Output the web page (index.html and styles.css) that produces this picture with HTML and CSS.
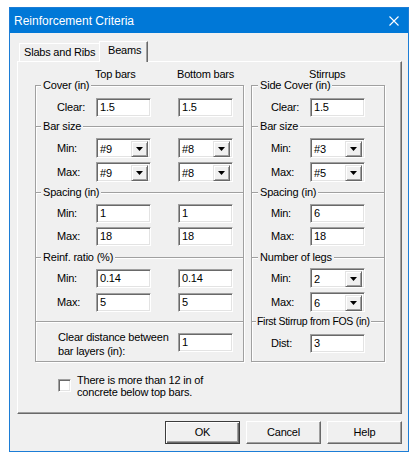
FILE: index.html
```html
<!DOCTYPE html>
<html>
<head>
    <meta charset="UTF-8">
    <title>Reinforcement Criteria</title>
    <link rel="stylesheet" href="styles.css">
</head>
<body>
    <div class="window">
        <div class="titlebar">
            <span class="title">Reinforcement Criteria</span>
            <svg class="close" width="10" height="10" viewBox="0 0 10 10">
                <path d="M0.5 0.5 L9.5 9.5 M9.5 0.5 L0.5 9.5" stroke="#fff" stroke-width="1.1" fill="none"/>
            </svg>
        </div>
        <div class="content">
            <div class="tabs">
                <div class="tab tab-slabs">Slabs and Ribs</div>
                <div class="tab tab-active">Beams</div>
            </div>
            <div class="panel">
                <div class="cols">
                    <!-- top / bottom bars -->
                    <div class="col col-left">
                        <div class="col-head grid3"><span></span><span>Top bars</span><span class="nowrap">Bottom bars</span></div>
                        <div class="box">
                            <div class="sec sec-cover">
                                <div class="legend">Cover (in)</div>
                                <div class="rows pad11">
                                    <div class="row grid3"><span>Clear:</span><div class="edit">1.5</div><div class="edit">1.5</div></div>
                                </div>
                            </div>
                            <div class="sec sec-bar">
                                <div class="legend">Bar size</div>
                                <div class="rows pad11">
                                    <div class="row grid3"><span>Min:</span>
                                        <div class="combo"><span>#9</span><div class="drop"><svg width="7" height="4" viewBox="0 0 7 4"><path d="M0 0 H7 L3.5 4 Z" fill="#000"/></svg></div></div>
                                        <div class="combo"><span>#8</span><div class="drop"><svg width="7" height="4" viewBox="0 0 7 4"><path d="M0 0 H7 L3.5 4 Z" fill="#000"/></svg></div></div>
                                    </div>
                                    <div class="row grid3"><span>Max:</span>
                                        <div class="combo"><span>#9</span><div class="drop"><svg width="7" height="4" viewBox="0 0 7 4"><path d="M0 0 H7 L3.5 4 Z" fill="#000"/></svg></div></div>
                                        <div class="combo"><span>#8</span><div class="drop"><svg width="7" height="4" viewBox="0 0 7 4"><path d="M0 0 H7 L3.5 4 Z" fill="#000"/></svg></div></div>
                                    </div>
                                </div>
                            </div>
                            <div class="sec sec-spacing">
                                <div class="legend">Spacing (in)</div>
                                <div class="rows pad10 tight">
                                    <div class="row grid3"><span>Min:</span><div class="edit">1</div><div class="edit">1</div></div>
                                    <div class="row grid3"><span>Max:</span><div class="edit">18</div><div class="edit">18</div></div>
                                </div>
                            </div>
                            <div class="sec sec-ratio">
                                <div class="legend">Reinf. ratio (%)</div>
                                <div class="rows pad10">
                                    <div class="row grid3"><span>Min:</span><div class="edit">0.14</div><div class="edit">0.14</div></div>
                                    <div class="row grid3"><span>Max:</span><div class="edit">5</div><div class="edit">5</div></div>
                                </div>
                            </div>
                            <div class="sec sec-last">
                                <div class="rows pad8">
                                    <div class="row grid3 row-layers">
                                        <span class="layers-label">Clear distance between<br>bar layers (in):</span>
                                        <div class="edit">1</div>
                                    </div>
                                </div>
                            </div>
                        </div>
                    </div>
                    <!-- stirrups -->
                    <div class="col col-right">
                        <div class="col-head grid2"><span></span><span>Stirrups</span></div>
                        <div class="box">
                            <div class="sec sec-cover">
                                <div class="legend">Side Cover (in)</div>
                                <div class="rows pad11">
                                    <div class="row grid2"><span>Clear:</span><div class="edit">1.5</div></div>
                                </div>
                            </div>
                            <div class="sec sec-bar">
                                <div class="legend">Bar size</div>
                                <div class="rows pad11">
                                    <div class="row grid2"><span>Min:</span>
                                        <div class="combo"><span>#3</span><div class="drop"><svg width="7" height="4" viewBox="0 0 7 4"><path d="M0 0 H7 L3.5 4 Z" fill="#000"/></svg></div></div>
                                    </div>
                                    <div class="row grid2"><span>Max:</span>
                                        <div class="combo"><span>#5</span><div class="drop"><svg width="7" height="4" viewBox="0 0 7 4"><path d="M0 0 H7 L3.5 4 Z" fill="#000"/></svg></div></div>
                                    </div>
                                </div>
                            </div>
                            <div class="sec sec-spacing">
                                <div class="legend">Spacing (in)</div>
                                <div class="rows pad10 tight">
                                    <div class="row grid2"><span>Min:</span><div class="edit">6</div></div>
                                    <div class="row grid2"><span>Max:</span><div class="edit">18</div></div>
                                </div>
                            </div>
                            <div class="sec sec-ratio">
                                <div class="legend">Number of legs</div>
                                <div class="rows pad10">
                                    <div class="row grid2"><span>Min:</span>
                                        <div class="combo"><span>2</span><div class="drop"><svg width="7" height="4" viewBox="0 0 7 4"><path d="M0 0 H7 L3.5 4 Z" fill="#000"/></svg></div></div>
                                    </div>
                                    <div class="row grid2"><span>Max:</span>
                                        <div class="combo"><span>6</span><div class="drop"><svg width="7" height="4" viewBox="0 0 7 4"><path d="M0 0 H7 L3.5 4 Z" fill="#000"/></svg></div></div>
                                    </div>
                                </div>
                            </div>
                            <div class="sec sec-last">
                                <div class="legend legend-wide">First Stirrup from FOS (in)</div>
                                <div class="rows pad11">
                                    <div class="row grid2"><span>Dist:</span><div class="edit">3</div></div>
                                </div>
                            </div>
                        </div>
                    </div>
                </div>
                <div class="check">
                    <div class="checkbox"></div>
                    <div class="check-text">There is more than 12 in of<br>concrete below top bars.</div>
                </div>
            </div>
            <div class="buttons">
                <div class="btn btn-default">OK</div>
                <div class="btn">Cancel</div>
                <div class="btn">Help</div>
            </div>
        </div>
    </div>
</body>
</html>
```

FILE: styles.css
```css
body {
    margin: 0;
    background: #fff;
    font-family: "Liberation Sans", Arial, sans-serif;
    font-size: 11px;
    letter-spacing: -0.2px;
    color: #000;
}
.window {
    box-sizing: border-box;
    width: 400px;
    height: 445px;
    margin: 7px 0 0 9px;
    border: 1px solid #1c7dd6;
    background: #f0f0f0;
}
.titlebar {
    height: 25px;
    background: #0078d7;
    color: #fff;
    display: flex;
    align-items: center;
    justify-content: space-between;
    padding: 0 9px 0 4px;
}
.title {
    font-size: 12px;
    letter-spacing: 0;
}
.close {
    display: block;
}
.content {
    padding: 8px 6px 0 7px;
}

/* tabs */
.tabs {
    display: flex;
    align-items: flex-end;
    height: 20px;
    padding-left: 2px;
}
.tab {
    box-sizing: border-box;
    height: 18px;
    line-height: 16px;
    white-space: nowrap;
    border-top: 1px solid #fff;
    border-left: 1px solid #fff;
    border-right: 1px solid #696969;
    box-shadow: inset -1px 0 0 #a0a0a0;
    padding: 0 4px;
}
.tab-slabs {
    width: 80px;
    border-right: 0;
    box-shadow: none;
}
.tab-active {
    position: relative;
    z-index: 1;
    width: 49px;
    height: 21px;
    margin-bottom: -1px;
    padding-left: 8px;
    background: #f0f0f0;
}

/* tab page */
.panel {
    box-sizing: border-box;
    width: 385px;
    height: 353px;
    border-top: 1px solid #fff;
    border-left: 1px solid #fff;
    border-right: 1px solid #696969;
    border-bottom: 1px solid #696969;
    box-shadow: inset -1px -1px 0 #a0a0a0;
    padding-left: 17px;
}
.cols {
    display: flex;
    gap: 7px;
}
.col-left {
    width: 209px;
}
.col-right {
    width: 134px;
}
.col-head {
    box-sizing: border-box;
    height: 23px;
    padding-top: 6px;
    line-height: 13px;
}
.nowrap {
    white-space: nowrap;
}
.grid3 {
    display: grid;
    grid-template-columns: 39px 82px 55px;
}
.grid2 {
    display: grid;
    grid-template-columns: 39px 55px;
}
.col-left .col-head,
.col-left .row {
    padding-left: 21px;
}
.col-right .col-head,
.col-right .row {
    padding-left: 19px;
}

/* group boxes */
.box {
    border: 1px solid #a0a0a0;
    border-top: 0;
    box-shadow: inset 1px 0 0 #fff, 1px 1px 0 #fff;
}
.sec {
    box-sizing: border-box;
    border-top: 1px solid #a0a0a0;
    box-shadow: inset 0 1px 0 #fff;
}
.sec-cover { height: 41px; }
.sec-bar { height: 66px; }
.sec-spacing { height: 65px; }
.sec-ratio { height: 64px; }
.sec-last { height: 40px; }
.legend {
    display: table;
    height: 13px;
    line-height: 13px;
    margin: -7px 0 -6px 5px;
    padding: 0 2px;
    background: #f0f0f0;
    white-space: nowrap;
}
.col-right .legend {
    margin-left: 6px;
}
.col-right .legend-wide {
    margin-left: 4px;
    padding: 0 1px;
    font-size: 10.5px;
    letter-spacing: -0.3px;
}
.rows {
    display: flex;
    flex-direction: column;
    gap: 4px;
}
.rows.tight { gap: 3px; }
.pad11 { padding-top: 11px; }
.pad10 { padding-top: 10px; }
.pad8 { padding-top: 8px; }
.row {
    height: 20px;
    align-items: center;
}
.row > span {
    white-space: nowrap;
}
.row-layers {
    height: auto;
    align-items: start;
}
.layers-label {
    grid-column: 1 / 3;
    line-height: 14px;
    padding-left: 1px;
}
.row-layers .edit {
    margin-top: 3px;
}

/* controls */
.edit,
.combo {
    box-sizing: border-box;
    width: 55px;
    height: 19px;
    background: #fff;
    border-top: 1px solid #a0a0a0;
    border-left: 1px solid #a0a0a0;
    border-right: 1px solid #fff;
    border-bottom: 1px solid #fff;
    box-shadow: inset 1px 1px 0 #696969, inset -1px -1px 0 #e3e3e3;
    padding-left: 3px;
    line-height: 17px;
}
.combo {
    height: 20px;
    display: flex;
    justify-content: space-between;
    padding: 2px 2px 2px 3px;
    line-height: 16px;
}
.drop {
    box-sizing: border-box;
    width: 17px;
    height: 16px;
    background: #f0f0f0;
    border-top: 1px solid #e3e3e3;
    border-left: 1px solid #e3e3e3;
    border-right: 1px solid #696969;
    border-bottom: 1px solid #696969;
    box-shadow: inset 1px 1px 0 #fff, inset -1px -1px 0 #a0a0a0;
    display: flex;
    align-items: center;
    justify-content: center;
}
.drop svg {
    display: block;
}

/* checkbox */
.check {
    display: flex;
    margin: 12px 0 0 23px;
}
.checkbox {
    box-sizing: border-box;
    width: 13px;
    height: 13px;
    margin-top: 5px;
    background: #fff;
    border-top: 1px solid #a0a0a0;
    border-left: 1px solid #a0a0a0;
    border-right: 1px solid #fff;
    border-bottom: 1px solid #fff;
    box-shadow: inset 1px 1px 0 #696969, inset -1px -1px 0 #e3e3e3;
}
.check-text {
    margin-left: 6px;
    line-height: 12px;
}

/* dialog buttons */
.buttons {
    display: flex;
    justify-content: flex-end;
    gap: 6px;
    margin-top: 7px;
}
.btn {
    box-sizing: border-box;
    width: 75px;
    height: 23px;
    line-height: 20px;
    text-align: center;
    background: #f0f0f0;
    border-top: 1px solid #fff;
    border-left: 1px solid #fff;
    border-right: 1px solid #696969;
    border-bottom: 1px solid #696969;
    box-shadow: inset -1px -1px 0 #a0a0a0;
}
.btn-default {
    border: 1px solid #3c3c3c;
    box-shadow: inset 1px 1px 0 #fff, inset -1px -1px 0 #696969, inset -2px -2px 0 #a0a0a0;
}
```
